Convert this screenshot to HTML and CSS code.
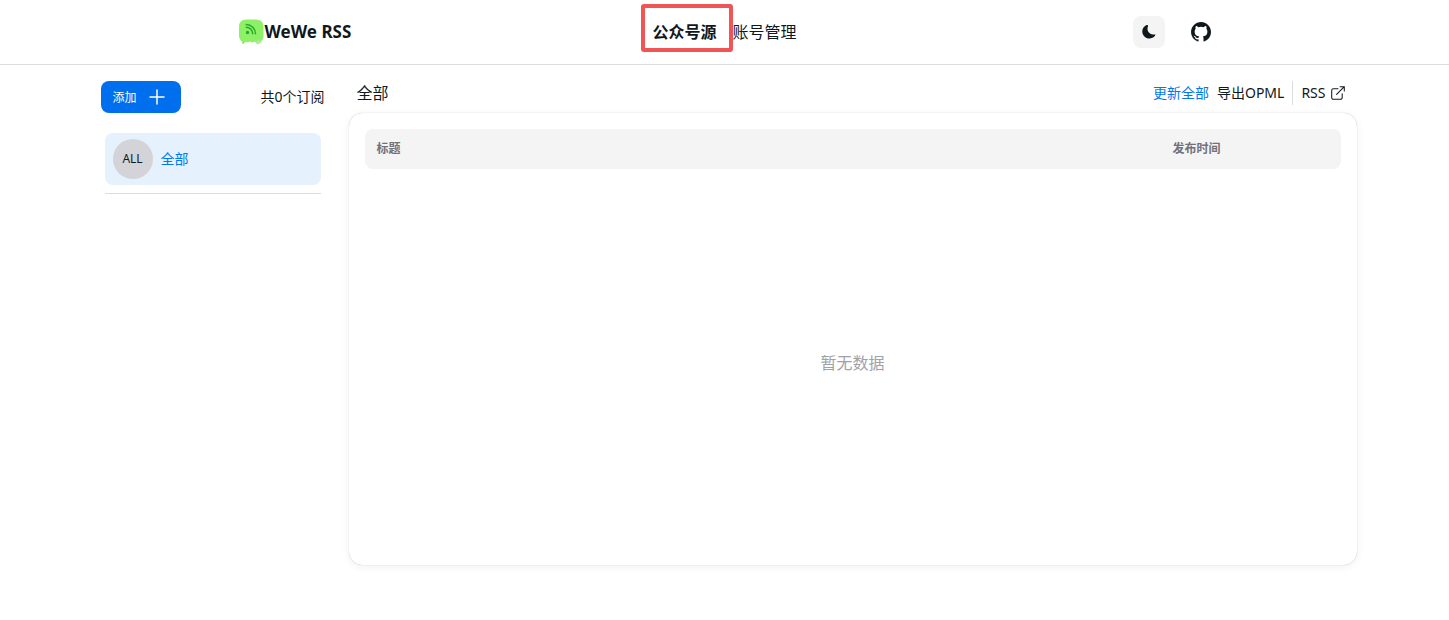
FILE: index.html
```
<!DOCTYPE html>
<html lang="zh-CN">
<head>
<meta charset="UTF-8">
<meta name="viewport" content="width=device-width, initial-scale=1">
<title>WeWe RSS</title>
<link rel="stylesheet" href="styles.css">
</head>
<body>
<header class="navbar">
  <div class="navbar-inner">
    <a class="brand" href="#">
      <svg class="logo" viewBox="0 0 28 28" aria-hidden="true">
        <path fill="#8df067" d="M9 1.500h10q7.500 0 7.500 7.500v9q0 3.500-2 5-.8 2.700-4.500 2.700l-2-2.200-2.500 1-2.500-1-2.500 1-2-.8L6.500 26 5 25.500q.5-1.500-.5-2.500Q2 21.500 2 18V9q0-7.500 7-7.500z"/>
        <path fill="#b5e6a6" d="M18 24l3-1.500 3.500.5q-1 3-4.500 3.200z"/>
        <g fill="none" stroke="#24ad2c" stroke-width="1.500" stroke-linecap="round">
          <path d="M9.200 6.500a9.300 9.300 0 0 1 9.300 9.300M9.200 9.300a6.500 6.500 0 0 1 6.500 6.500"/>
          <circle cx="10.500" cy="14.600" r="1" fill="#24ad2c"/>
        </g>
      </svg>
      <span>WeWe RSS</span>
    </a>
    <nav class="nav-links">
      <a class="nav-link active" href="#">公众号源</a>
      <a class="nav-link" href="#">账号管理</a>
    </nav>
    <div class="nav-actions">
      <button class="theme-btn" type="button" aria-label="切换主题">
        <svg viewBox="0 0 24 24" width="16" height="16" fill="#11181c"><path d="M21.500 15.900c-.2-.3-.7-.8-1.900-.6-.7.100-1.300.2-2 .2-2.500-.1-4.700-1.300-6.300-3-1.400-1.500-2.200-3.500-2.200-5.700 0-1.200.2-2.400.7-3.500.5-1.100.1-1.700-.1-1.900-.3-.3-.9-.6-2-.2C3.600 3 1 7.200 1.300 11.700c.3 4.200 3.300 7.900 7.200 9.200 1 .3 1.900.5 2.900.6h.5c3.300 0 6.500-1.600 8.500-4.200.7-1 .5-1.600.3-1.900z" transform="translate(.6 .4)"/></svg>
      </button>
      <a class="github-link" href="#" aria-label="GitHub">
        <svg viewBox="0 0 24 24" width="24" height="24" fill="#11181c"><path fill-rule="evenodd" clip-rule="evenodd" d="M12.026 2c-5.509 0-9.974 4.465-9.974 9.974 0 4.406 2.857 8.145 6.821 9.465.499.090.679-.217.679-.481 0-.237-.008-.865-.011-1.696-2.775.602-3.361-1.338-3.361-1.338-.452-1.152-1.107-1.459-1.107-1.459-.905-.619.069-.605.069-.605 1.002.070 1.527 1.028 1.527 1.028.890 1.524 2.336 1.084 2.902.829.091-.645.351-1.085.635-1.334-2.214-.251-4.542-1.107-4.542-4.930 0-1.087.389-1.979 1.024-2.675-.101-.253-.446-1.268.099-2.640 0 0 .837-.269 2.742 1.021a9.582 9.582 0 0 1 2.496-.336 9.554 9.554 0 0 1 2.496.336c1.906-1.291 2.742-1.021 2.742-1.021.545 1.372.203 2.387.099 2.640.640.696 1.024 1.587 1.024 2.675 0 3.833-2.330 4.675-4.552 4.922.355.308.675.916.675 1.846 0 1.334-.012 2.410-.012 2.737 0 .267.178.577.687.479C19.146 20.115 22 16.379 22 11.974 22 6.465 17.535 2 12.026 2z"/></svg>
      </a>
    </div>
  </div>
</header>
<main class="page">
  <aside class="sidebar">
    <div class="sidebar-top">
      <button class="add-btn" type="button">
        添加
        <svg viewBox="0 0 24 24" width="24" height="24" fill="none" stroke="#fff" stroke-width="1.500" stroke-linecap="round"><path d="M5 12h14M12 5v14"/></svg>
      </button>
      <span class="count">共0个订阅</span>
    </div>
    <div class="feed-list">
      <a class="feed" href="#">
        <span class="avatar">ALL</span>
        <span>全部</span>
      </a>
    </div>
  </aside>
  <section class="content">
    <div class="content-top">
      <h1 class="title">全部</h1>
      <div class="tools">
        <a class="tool primary" href="#">更新全部</a>
        <a class="tool" href="#">导出OPML</a>
        <span class="divider"></span>
        <a class="tool rss" href="#">RSS
          <svg viewBox="2 2 20 20" width="14" height="14" fill="none" stroke="#11181c" stroke-width="1.500" stroke-linecap="round" stroke-linejoin="round"><path d="M12 6H5.500A2.500 2.500 0 0 0 3 8.500v10A2.500 2.500 0 0 0 5.500 21h10a2.500 2.500 0 0 0 2.500-2.500V13M10 14L21 3m0 0h-6M21 3v6"/></svg>
        </a>
      </div>
    </div>
    <div class="card">
      <table class="articles">
        <thead>
          <tr><th>标题</th><th class="col-time">发布时间</th></tr>
        </thead>
        <tbody>
          <tr><td class="empty" colspan="2">暂无数据</td></tr>
        </tbody>
      </table>
    </div>
  </section>
</main>
<div class="highlight"></div>
</body>
</html>
```

FILE: styles.css
```
* { box-sizing: border-box; }
body { margin: 0; background: #fff; color: #11181c; font-family: "Noto Sans", "Noto Sans CJK SC", sans-serif; font-size: 16px; line-height: 24px; }
a { color: inherit; text-decoration: none; }
button { border: 0; padding: 0; font-family: inherit; cursor: pointer; }
svg { display: block; flex: none; }

.navbar { border-bottom: 1px solid #dcdcdd; }
.navbar-inner { display: flex; align-items: center; max-width: 1024px; height: 64px; margin: 0 auto; padding: 0 24px; }
.brand { display: flex; flex: 1; align-items: center; font-size: 17px; font-weight: bold; }
.logo { width: 28px; height: 28px; }
.nav-links { display: flex; gap: 16px; }
.nav-link.active { font-weight: bold; }
.nav-actions { display: flex; flex: 1; align-items: center; justify-content: flex-end; gap: 24px; }
.theme-btn { display: flex; align-items: center; justify-content: center; width: 32px; height: 32px; border-radius: 8px; background: #f4f4f5; }

.page { display: flex; max-width: 1280px; margin: 0 auto; }
.sidebar { width: 256px; padding: 16px; }
.sidebar-top { display: flex; align-items: center; justify-content: space-between; font-size: 14px; }
.add-btn { display: flex; align-items: center; justify-content: center; gap: 8px; width: 80px; height: 32px; border-radius: 8px; background: #006fee; color: #fff; font-size: 12px; }
.feed-list { margin: 20px 4px 0; padding-bottom: 8px; border-bottom: 1px solid #dcdcdd; }
.feed { display: flex; align-items: center; gap: 8px; padding: 6px 8px; border-radius: 8px; background: #e6f1fe; color: #0078ee; font-size: 14px; }
.avatar { display: flex; align-items: center; justify-content: center; width: 40px; height: 40px; border-radius: 50%; background: #d4d4d8; color: #11181c; font-size: 12px; }

.content { flex: 1; padding: 16px 8px; }
.content-top { display: flex; align-items: center; justify-content: space-between; height: 24px; margin-bottom: 8px; padding: 0 12px 0 8px; }
.title { margin: 0; font-size: 16px; font-weight: normal; }
.tools { display: flex; align-items: center; gap: 8px; font-size: 14px; }
.tool.primary { color: #0078ee; }
.divider { width: 1px; height: 24px; background: #dcdcdd; }
.rss { display: flex; align-items: center; gap: 5px; }

.card { padding: 16px; border-radius: 14px; box-shadow: 0 0 1px rgba(0, 0, 0, .3), 0 2px 10px rgba(0, 0, 0, .06); }
.articles { width: 100%; border-spacing: 0; table-layout: fixed; }
.articles th { height: 40px; padding: 0 12px; background: #f4f4f5; color: #71717a; font-size: 12px; line-height: 16px; text-align: left; }
.articles th:first-child { border-radius: 8px 0 0 8px; }
.articles th:last-child { border-radius: 0 8px 8px 0; }
.articles .col-time { width: 180px; }
.empty { height: 380px; padding: 8px 0 0; color: #a1a1aa; text-align: center; vertical-align: middle; }

.highlight { position: absolute; top: 4px; left: calc(50% - 84px); width: 92px; height: 48px; border: 4px solid #f05454; border-radius: 3px; pointer-events: none; }
```
